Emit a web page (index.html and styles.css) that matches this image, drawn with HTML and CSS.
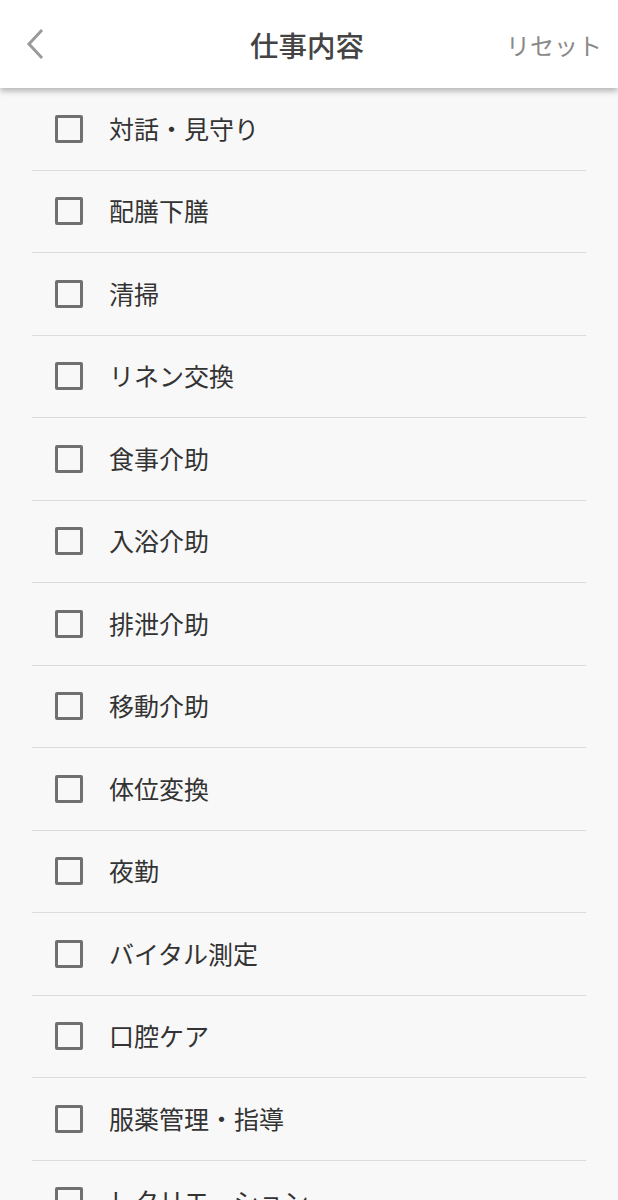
FILE: index.html
```html
<!DOCTYPE html>
<html lang="ja">
<head>
<meta charset="utf-8">
<link rel="stylesheet" href="styles.css">
</head>
<body>
<header class="header">
  <div class="back">
    <svg width="22" height="32" viewBox="0 0 22 32"><path d="M18 2 L5 16 L18 30" fill="none" stroke="#9a9a9a" stroke-width="3"/></svg>
  </div>
  <h1 class="title">仕事内容</h1>
  <div class="reset">リセット</div>
</header>
<ul class="list">
  <li class="row"><span class="box"></span><span class="label">対話・見守り</span></li>
  <li class="row"><span class="box"></span><span class="label">配膳下膳</span></li>
  <li class="row"><span class="box"></span><span class="label">清掃</span></li>
  <li class="row"><span class="box"></span><span class="label">リネン交換</span></li>
  <li class="row"><span class="box"></span><span class="label">食事介助</span></li>
  <li class="row"><span class="box"></span><span class="label">入浴介助</span></li>
  <li class="row"><span class="box"></span><span class="label">排泄介助</span></li>
  <li class="row"><span class="box"></span><span class="label">移動介助</span></li>
  <li class="row"><span class="box"></span><span class="label">体位変換</span></li>
  <li class="row"><span class="box"></span><span class="label">夜勤</span></li>
  <li class="row"><span class="box"></span><span class="label">バイタル測定</span></li>
  <li class="row"><span class="box"></span><span class="label">口腔ケア</span></li>
  <li class="row"><span class="box"></span><span class="label">服薬管理・指導</span></li>
  <li class="row"><span class="box"></span><span class="label">レクリエーション</span></li>
</ul>
</body>
</html>
```

FILE: styles.css
```css
* { box-sizing: border-box; }
html, body { margin: 0; padding: 0; }
body {
  background: #f8f8f8;
  font-family: "Noto Sans CJK JP", "Noto Sans", sans-serif;
  width: 618px;
  height: 1200px;
  overflow: hidden;
}
.header {
  position: relative;
  z-index: 2;
  height: 88px;
  background: #fff;
  display: flex;
  align-items: center;
  justify-content: space-between;
  padding: 0 16px 0 24px;
  box-shadow: 0 3px 6px rgba(0,0,0,0.28);
}
.back { width: 84px; display: flex; align-items: center; }
.back svg { display: block; }
.title {
  margin: 0;
  font-size: 28.5px;
  font-weight: 500;
  color: #444;
}
.reset {
  width: 96px;
  text-align: right;
  font-size: 24px;
  color: #8a8a8a;
}
.list {
  list-style: none;
  margin: 0 32px;
  padding: 0;
}
.row {
  height: 82.5px;
  border-bottom: 1px solid #dcdcdc;
  display: flex;
  align-items: center;
  padding-left: 23px;
}
.box {
  width: 28px;
  height: 28px;
  border: 3px solid #707070;
  border-radius: 2px;
  flex: none;
}
.label {
  margin-left: 26px;
  margin-top: -2px;
  font-size: 25px;
  color: #333;
}
```
